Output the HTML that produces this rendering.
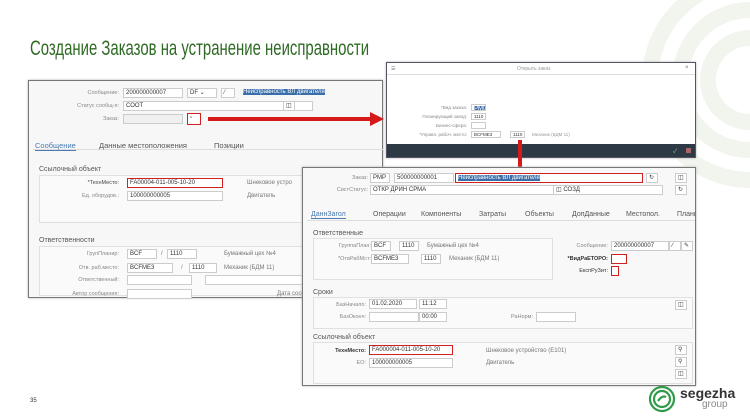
<!DOCTYPE html>
<html><head><meta charset="utf-8"><style>
*{margin:0;padding:0;box-sizing:border-box}
html,body{width:750px;height:420px;overflow:hidden}
body{background:#fff;position:relative;font-family:"Liberation Sans","Noto Sans CJK SC",sans-serif;color:#555}
.a{position:absolute}
.t{font-size:6px;color:#777;white-space:nowrap}
.f{position:absolute;height:10px;border:1px solid #ccc;background:#fff;font-size:6px;color:#333;padding-left:2px;line-height:8px;white-space:nowrap;overflow:hidden}
.r{border:1.5px solid #d02020!important}
.win{position:absolute;background:#fff;border:1px solid #777;box-shadow:0 0 2px #aaa}
.grp{position:absolute;border:1px solid #e0e0e0;background:#fafafa}
.h{position:absolute;font-size:7px;color:#555}
.sel{background:#3a6ea8;color:#fff}
.lbl{position:absolute;font-size:5.5px;color:#888;text-align:right;white-space:nowrap}
</style></head><body>
<svg class="a" style="left:620px;top:0" width="130" height="200" viewBox="0 0 130 200">
<g fill="none" stroke="#f1f5ee" stroke-width="16">
<circle cx="130" cy="80" r="100"/><circle cx="130" cy="80" r="70"/><circle cx="130" cy="80" r="42"/></g></svg>

<div class="a" style="left:30px;top:37px;font-size:21px;color:#2f6a24;white-space:nowrap;transform:scaleX(0.71);transform-origin:left top">Создание Заказов на устранение неисправности</div>

<!-- window 1 -->
<div class="win" style="left:28px;top:80px;width:355px;height:218px;background:#f7f7f7">
 <div class="lbl" style="left:20px;top:9px;width:70px">Сообщение:</div>
 <div class="f" style="left:94px;top:7px;width:60px">200000000007</div>
 <div class="f" style="left:158px;top:7px;width:30px">DF ⌄</div>
 <div class="f" style="left:192px;top:7px;width:14px">⁄</div>
 <div class="f" style="left:212px;top:7px;width:143px;border:none;background:none"><span class="sel">Неисправность ВЛ двигателя</span></div>
 <div class="lbl" style="left:20px;top:22px;width:70px">Статус сообщ-я:</div>
 <div class="f" style="left:94px;top:20px;width:190px">СООТ</div>
 <div class="f" style="left:254px;top:20px;width:12px">◫</div>
 <div class="lbl" style="left:20px;top:35px;width:70px">Заказ:</div>
 <div class="f" style="left:94px;top:33px;width:60px;background:#f0f0f0"></div>
 <div class="f r" style="left:158px;top:32px;width:14px;height:12px">▫</div>
 <div class="a" style="left:4px;top:57px;width:350px;border-bottom:1px solid #ddd;height:12px"></div>
 <div class="h" style="left:6px;top:60px;color:#4a7ab0;font-size:7.5px;border-bottom:1px solid #4a7ab0">Сообщение</div>
 <div class="h" style="left:70px;top:60px;font-size:7.5px">Данные местоположения</div>
 <div class="h" style="left:185px;top:60px;font-size:7.5px">Позиции</div>
 <div class="h" style="left:10px;top:85px">Ссылочный объект</div>
 <div class="grp" style="left:10px;top:94px;width:345px;height:48px"></div>
 <div class="lbl" style="left:20px;top:99px;width:70px;color:#444">*ТехнМесто:</div>
 <div class="f r" style="left:98px;top:97px;width:96px">FA00004-011-005-10-20</div>
 <div class="f" style="left:98px;top:110px;width:96px">100000000005</div>
 <div class="lbl" style="left:20px;top:112px;width:70px">Ед. оборудов.:</div>
 <div class="t a" style="left:218px;top:99px">Шнековое устро</div>
 <div class="t a" style="left:218px;top:112px">Двигатель</div>
 <div class="h" style="left:10px;top:156px">Ответственности</div>
 <div class="grp" style="left:10px;top:165px;width:345px;height:50px"></div>
 <div class="lbl" style="left:20px;top:170px;width:70px">ГрупПланир:</div>
 <div class="f" style="left:98px;top:168px;width:30px">BCF</div>
 <div class="t a" style="left:132px;top:170px">/</div>
 <div class="f" style="left:138px;top:168px;width:30px">1110</div>
 <div class="t a" style="left:195px;top:170px">Бумажный цех №4</div>
 <div class="lbl" style="left:20px;top:184px;width:70px">Отв. раб.место:</div>
 <div class="f" style="left:98px;top:182px;width:46px">BCFME3</div>
 <div class="t a" style="left:152px;top:184px">/</div>
 <div class="f" style="left:160px;top:182px;width:28px">1110</div>
 <div class="t a" style="left:195px;top:184px">Механик (БДМ 11)</div>
 <div class="lbl" style="left:20px;top:196px;width:70px">Ответственный:</div>
 <div class="f" style="left:98px;top:194px;width:65px"></div>
 <div class="f" style="left:176px;top:194px;width:140px"></div>
 <div class="lbl" style="left:20px;top:210px;width:70px">Автор сообщения:</div>
 <div class="f" style="left:98px;top:208px;width:65px"></div>
 <div class="t a" style="left:248px;top:210px">Дата соо</div>
</div>

<div class="a" style="left:208px;top:117px;width:165px;height:4px;background:#d41a1a"></div>
<svg class="a" style="left:370px;top:112px" width="14" height="14"><polygon points="0,0 14,7 0,14" fill="#d41a1a"/></svg>

<!-- popup -->
<div class="win" style="left:386px;top:62px;width:310px;height:96px;border-color:#556">
 <div class="a" style="left:0;top:0;width:308px;height:12px;border-bottom:1px solid #ddd"></div>
 <div class="t a" style="left:4px;top:3px;font-size:5px">☰</div>
 <div class="t a" style="left:130px;top:3px;font-size:5px;color:#999">Открыть заказ</div>
 <div class="t a" style="left:298px;top:2px;font-size:6px">×</div>
 <div class="lbl" style="left:10px;top:42px;width:70px;font-size:4.5px">*Вид заказа:</div>
 <div class="f" style="left:84px;top:41px;width:15px;height:7px"><span class="sel">PM0</span></div>
 <div class="lbl" style="left:10px;top:51px;width:70px;font-size:4.5px">Планирующий завод:</div>
 <div class="f" style="left:84px;top:50px;width:15px;height:7px;font-size:4.5px;line-height:5px">1110</div>
 <div class="lbl" style="left:10px;top:60px;width:70px;font-size:4.5px">Бизнес-сфера:</div>
 <div class="f" style="left:84px;top:59px;width:15px;height:7px"></div>
 <div class="lbl" style="left:10px;top:69px;width:70px;font-size:4.5px">*Управл. рабоч. место:</div>
 <div class="f" style="left:84px;top:68px;width:30px;height:7px;font-size:4.5px;line-height:5px">BCFME3</div>
 <div class="f" style="left:123px;top:68px;width:15px;height:7px;font-size:4.5px;line-height:5px">1110</div>
 <div class="t a" style="left:145px;top:69px;font-size:4.5px;color:#999">Механик (БДМ 11)</div>
 <div class="a" style="left:0;top:81px;width:308px;height:13px;background:#2d3a45"></div>
 <div class="a" style="left:286px;top:83px;color:#7c7;font-size:6px">✓</div>
 <div class="a" style="left:299px;top:85px;width:5px;height:5px;background:#a66"></div>
</div>

<div class="a" style="left:518px;top:140px;width:4px;height:30px;background:#d41a1a"></div>
<svg class="a" style="left:513px;top:168px" width="14" height="10"><polygon points="0,0 14,0 7,10" fill="#d41a1a"/></svg>

<!-- window 2 -->
<div class="win" style="left:302px;top:167px;width:394px;height:219px;background:#f8f8f8">
 <div class="lbl" style="left:5px;top:7px;width:60px">Заказ:</div>
 <div class="f" style="left:67px;top:5px;width:20px">PMP</div>
 <div class="f" style="left:91px;top:5px;width:60px">500000000001</div>
 <div class="f r" style="left:152px;top:5px;width:188px"><span class="sel">Неисправность ВЛ двигателя</span></div>
 <div class="f" style="left:343px;top:5px;width:12px">↻</div>
 <div class="f" style="left:372px;top:5px;width:12px">◫</div>
 <div class="lbl" style="left:5px;top:19px;width:60px">СистСтатус:</div>
 <div class="f" style="left:67px;top:17px;width:185px">ОТКР ДРИН СРМА</div>
 <div class="f" style="left:250px;top:17px;width:110px">◫ СОЗД</div>
 <div class="f" style="left:372px;top:17px;width:12px">↻</div>
 <div class="a" style="left:4px;top:41px;width:388px;border-bottom:1px solid #ddd;height:12px"></div>
 <div class="h" style="left:8px;top:43px;color:#4a7ab0;border-bottom:1px solid #4a7ab0">ДаннЗагол</div>
 <div class="h" style="left:70px;top:43px">Операции</div>
 <div class="h" style="left:118px;top:43px">Компоненты</div>
 <div class="h" style="left:176px;top:43px">Затраты</div>
 <div class="h" style="left:222px;top:43px">Объекты</div>
 <div class="h" style="left:269px;top:43px">ДопДанные</div>
 <div class="h" style="left:323px;top:43px">Местопол.</div>
 <div class="h" style="left:374px;top:43px;width:18px;overflow:hidden">Планир</div>
 <div class="h" style="left:10px;top:62px">Ответственные</div>
 <div class="grp" style="left:10px;top:70px;width:240px;height:42px"></div>
 <div class="lbl" style="left:8px;top:75px;width:60px">ГруппаПлан:</div>
 <div class="f" style="left:68px;top:73px;width:20px">BCF</div>
 <div class="f" style="left:96px;top:73px;width:20px">1110</div>
 <div class="t a" style="left:124px;top:75px">Бумажный цех №4</div>
 <div class="lbl" style="left:8px;top:88px;width:60px">*ОтвРабМст:</div>
 <div class="f" style="left:68px;top:86px;width:38px">BCFME3</div>
 <div class="f" style="left:118px;top:86px;width:20px">1110</div>
 <div class="t a" style="left:146px;top:88px">Механик (БДМ 11)</div>
 <div class="lbl" style="left:240px;top:75px;width:65px">Сообщение:</div>
 <div class="f" style="left:308px;top:73px;width:58px">200000000007</div>
 <div class="f" style="left:366px;top:73px;width:12px">⁄</div>
 <div class="f" style="left:378px;top:73px;width:12px">✎</div>
 <div class="lbl" style="left:240px;top:88px;width:65px;color:#333;font-weight:bold">*ВидРаЕТОРО:</div>
 <div class="f r" style="left:308px;top:86px;width:16px"></div>
 <div class="lbl" style="left:240px;top:100px;width:65px;color:#333">ЕкспРуЗит:</div>
 <div class="f r" style="left:308px;top:98px;width:8px"></div>
 <div class="h" style="left:10px;top:121px">Сроки</div>
 <div class="grp" style="left:10px;top:129px;width:380px;height:32px"></div>
 <div class="lbl" style="left:8px;top:134px;width:55px">БазНачало:</div>
 <div class="f" style="left:66px;top:131px;width:48px">01.02.2020</div>
 <div class="f" style="left:116px;top:131px;width:28px">11:12</div>
 <div class="lbl" style="left:8px;top:146px;width:55px">БазОконч:</div>
 <div class="f" style="left:66px;top:144px;width:50px"></div>
 <div class="f" style="left:116px;top:144px;width:28px">00:00</div>
 <div class="lbl" style="left:180px;top:146px;width:50px">РаНорм:</div>
 <div class="f" style="left:233px;top:144px;width:40px"></div>
 <div class="f" style="left:372px;top:132px;width:12px">◫</div>
 <div class="h" style="left:10px;top:166px">Ссылочный объект</div>
 <div class="grp" style="left:10px;top:174px;width:380px;height:42px"></div>
 <div class="lbl" style="left:8px;top:180px;width:55px;color:#333;font-weight:bold">ТехнМесто:</div>
 <div class="f r" style="left:66px;top:177px;width:84px">FA000004-011-005-10-20</div>
 <div class="lbl" style="left:8px;top:192px;width:55px">ЕО:</div>
 <div class="f" style="left:66px;top:190px;width:84px">100000000005</div>
 <div class="t a" style="left:183px;top:180px">Шнековое устройство (Е101)</div>
 <div class="t a" style="left:183px;top:192px">Двигатель</div>
 <div class="f" style="left:372px;top:177px;width:12px">⚲</div>
 <div class="f" style="left:372px;top:189px;width:12px">⚲</div>
 <div class="f" style="left:372px;top:201px;width:12px">◫</div>
</div>

<svg class="a" style="left:647px;top:385px" width="30" height="28" viewBox="0 0 30 28">
<g fill="none" stroke="#2f9a4a" stroke-width="2.2"><circle cx="15" cy="14" r="12"/><circle cx="15" cy="14" r="8"/><path d="M11 16 Q15 10 19 12"/></g></svg>
<div class="a" style="left:680px;top:385px;font-size:14px;font-weight:bold;color:#333">segezha</div>
<div class="a" style="left:702px;top:399px;font-size:10px;color:#888">group</div>
<div class="a" style="left:30px;top:398px;font-size:6px;color:#333">35</div>
</body></html>
